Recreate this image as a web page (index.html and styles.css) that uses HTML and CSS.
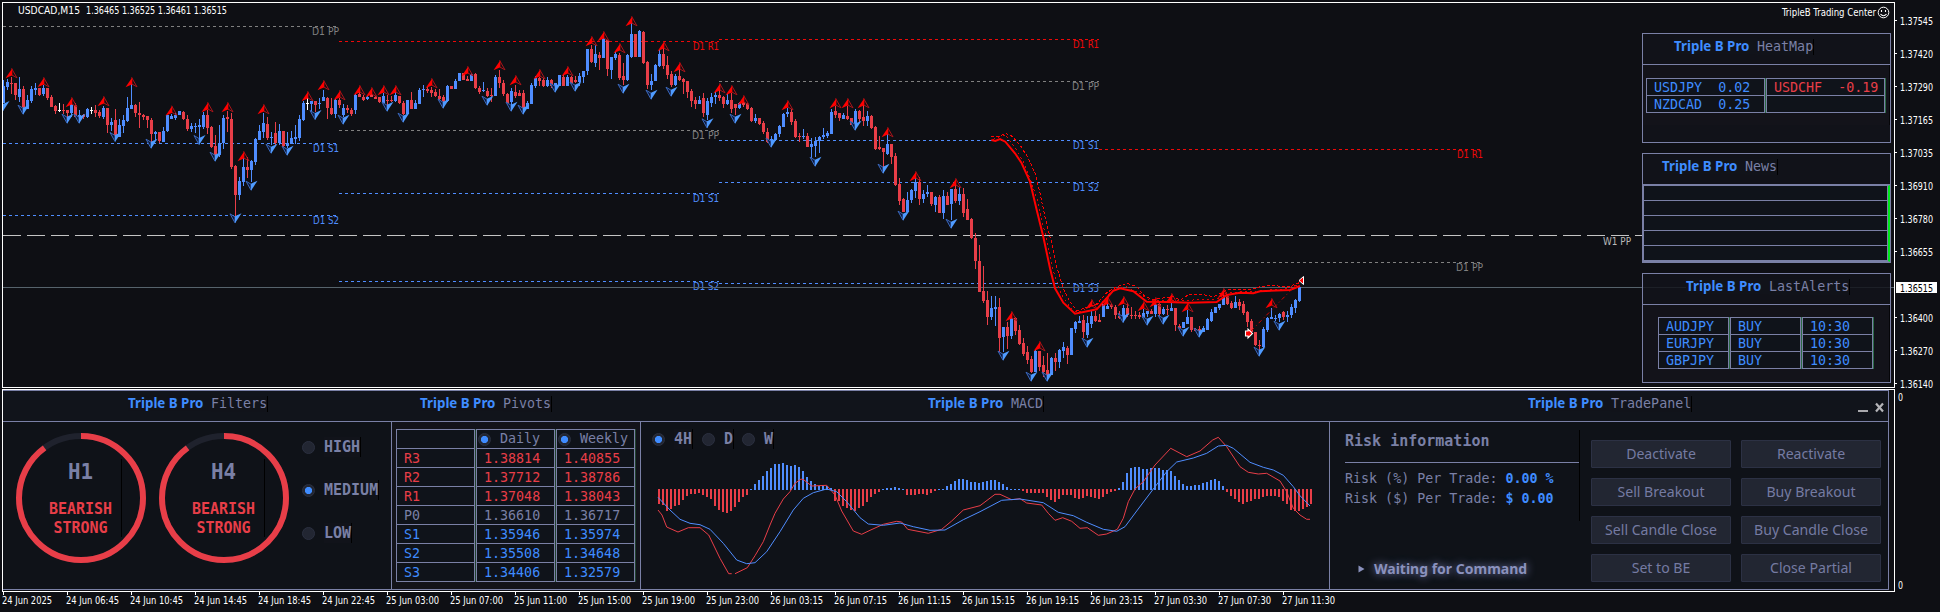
FILE: index.html
```html
<!DOCTYPE html>
<html lang="en">
<head>
<meta charset="utf-8">
<title>USDCAD,M15</title>
<link rel="stylesheet" href="styles.css">
</head>
<body>
<div class="terminal">
  <main class="workspace">
    <section class="chart">
      <svg class="chart-canvas" id="price" viewBox="3 3 1891 384" width="1891" height="384"></svg>
      <aside class="widgets">
        <section class="widget">
          <h2 class="widget-head pad-heat"><b class="brand">Triple B Pro</b><span class="name">HeatMap</span></h2>
          <div class="heat-body">
            <div class="col"><div class="cell up">USDJPY&nbsp; 0.02</div><div class="cell up">NZDCAD&nbsp; 0.25</div></div>
            <div class="col"><div class="cell down">USDCHF&nbsp; -0.19</div><div class="cell"></div></div>
          </div>
        </section>
        <section class="widget">
          <h2 class="widget-head pad-news"><b class="brand">Triple B Pro</b><span class="name">News</span></h2>
          <div class="news-body"><div class="news-row"></div><div class="news-row"></div><div class="news-row"></div><div class="news-row"></div><div class="news-row"></div></div>
        </section>
        <section class="widget">
          <h2 class="widget-head pad-alerts"><b class="brand">Triple B Pro</b><span class="name">LastAlerts</span></h2>
          <div class="alert-body">
            <div class="col"><div class="cell up">AUDJPY</div><div class="cell up">EURJPY</div><div class="cell up">GBPJPY</div></div>
            <div class="col"><div class="cell up">BUY</div><div class="cell up">BUY</div><div class="cell up">BUY</div></div>
            <div class="col"><div class="cell up">10:30</div><div class="cell up">10:30</div><div class="cell up">10:30</div></div>
          </div>
        </section>
      </aside>
    </section>

    <section class="dock">
      <div class="dock-inner">
        <header class="dock-head">
          <h2 class="dock-title pad-filters"><b class="brand">Triple B Pro</b><span class="name">Filters</span></h2>
          <h2 class="dock-title pad-pivots"><b class="brand">Triple B Pro</b><span class="name">Pivots</span></h2>
          <h2 class="dock-title pad-macd"><b class="brand">Triple B Pro</b><span class="name">MACD</span></h2>
          <h2 class="dock-title pad-trade"><b class="brand">Triple B Pro</b><span class="name">TradePanel</span>
            <svg class="window-icons" width="26" height="12" viewBox="0 0 26 12"><path d="M0 9H10" stroke="#a9a9ad" stroke-width="2"/><path d="M18 1.5L25 9.5M25 1.5L18 9.5" stroke="#b4b4b8" stroke-width="2.2"/></svg>
          </h2>
        </header>
        <div class="dock-body">
          <section class="filters">
            <div class="gauge">
              <svg class="ring" viewBox="0 0 130 130" width="130" height="130"><circle cx="65" cy="65" r="62" class="track"/><circle cx="65" cy="65" r="62" class="value" pathLength="100"/></svg>
              <div class="gauge-text"><strong>H1</strong><span>BEARISH</span><span>STRONG</span></div>
            </div>
            <div class="gauge">
              <svg class="ring" viewBox="0 0 130 130" width="130" height="130"><circle cx="65" cy="65" r="62" class="track"/><circle cx="65" cy="65" r="62" class="value" pathLength="100"/></svg>
              <div class="gauge-text"><strong>H4</strong><span>BEARISH</span><span>STRONG</span></div>
            </div>
            <div class="levels">
              <label class="option"><i class="radio"></i><span class="caret">HIGH</span></label>
              <label class="option"><i class="radio on"></i><span class="caret">MEDIUM</span></label>
              <label class="option"><i class="radio"></i><span class="caret">LOW</span></label>
            </div>
          </section>

          <section class="pivots">
            <div class="pcol"><div class="pcell"></div><div class="pcell down">R3</div><div class="pcell down">R2</div><div class="pcell down">R1</div><div class="pcell mid">P0</div><div class="pcell up">S1</div><div class="pcell up">S2</div><div class="pcell up">S3</div></div>
            <div class="pcol"><div class="pcell mid head"><i class="radio on"></i>Daily</div><div class="pcell down">1.38814</div><div class="pcell down">1.37712</div><div class="pcell down">1.37048</div><div class="pcell mid">1.36610</div><div class="pcell up">1.35946</div><div class="pcell up">1.35508</div><div class="pcell up">1.34406</div></div>
            <div class="pcol"><div class="pcell mid head"><i class="radio on"></i>Weekly</div><div class="pcell down">1.40855</div><div class="pcell down">1.38786</div><div class="pcell down">1.38043</div><div class="pcell mid">1.36717</div><div class="pcell up">1.35974</div><div class="pcell up">1.34648</div><div class="pcell up">1.32579</div></div>
          </section>

          <section class="macd">
            <svg class="macd-canvas" id="macd" viewBox="641 422 688 167" width="688" height="167"></svg>
            <div class="frames">
              <label class="option w50"><i class="radio on"></i><span class="caret">4H</span></label>
              <label class="option w40"><i class="radio"></i><span class="caret">D</span></label>
              <label class="option w40"><i class="radio"></i><span class="caret">W</span></label>
            </div>
          </section>

          <section class="trade">
            <div class="risk">
              <div class="risk-box">
                <h3>Risk information</h3>
                <p>Risk (%) Per Trade: <b>0.00 %</b></p>
                <p>Risk ($) Per Trade: <b>$ 0.00</b></p>
              </div>
              <div class="status"><svg width="7" height="8" viewBox="0 0 7 8"><path d="M0.5 0.5L6.5 4L0.5 7.5Z" fill="#8a91bd"/></svg><span>Waiting for Command</span></div>
            </div>
            <div class="buttons">
              <button>Deactivate</button><button>Reactivate</button>
              <button>Sell Breakout</button><button>Buy Breakout</button>
              <button>Sell Candle Close</button><button>Buy Candle Close</button>
              <button>Set to BE</button><button>Close Partial</button>
            </div>
          </section>
        </div>
      </div>
    </section>
    <svg class="time-axis" id="times" viewBox="0 592 1895 20" width="1895" height="20"></svg>
  </main>
  <aside class="price-axis"><svg id="prices" viewBox="1895 0 45 612" width="45" height="612"></svg></aside>
</div>
<script src="chart.js"></script>
</body>
</html>
```
FILE: styles.css
```css
* { box-sizing: border-box; }
body { margin: 0; background: #0e0f14; width: 1940px; height: 612px; overflow: hidden; }
.terminal { display: grid; grid-template-columns: 1895px 45px; height: 612px; }
.workspace { display: flex; flex-direction: column; padding: 2px 0 0 2px; gap: 1px; width: 1895px; }
.chart { position: relative; width: 1893px; height: 386px; border: 1px solid #fff; }
.chart-canvas, .macd-canvas, .time-axis, .price-axis svg { display: block; }
.ui { font-family: "DejaVu Sans Condensed", "DejaVu Sans", sans-serif; font-stretch: condensed; font-size: 10.5px; fill: #fff; }
.time-axis { margin-left: -2px; margin-top: -1px; }

.widgets { position: absolute; left: 1639px; top: 30px; display: flex; flex-direction: column; gap: 10px; }
.widget { width: 249px; height: 110px; border: 1px solid #7a80a6; background: rgba(18, 19, 26, .84); }
.widget-head { margin: 0; height: 31px; border-bottom: 1px solid #7a80a6; display: flex; align-items: center; padding-bottom: 6px; }
.brand { font: bold 13.33px "Noto Sans", sans-serif; color: #3f8cff; width: 83px; white-space: nowrap; line-height: 16px; background: #11131a; }
.name { font: 13.33px/16px "DejaVu Sans Mono", monospace; color: #7a80a6; border-right: 1px solid #000; background: #11131a; position: relative; top: 1px; }
.pad-heat { padding-left: 31px; }
.pad-news { padding-left: 19px; }
.pad-alerts { padding-left: 43px; }

.col { border-right: 1px solid #2b6a45; }
.cell { height: 17px; border: 1px solid #7a80a6; border-bottom: 0; background: #0f131a; font: 13.33px/17px "DejaVu Sans Mono", monospace; padding-left: 7px; white-space: nowrap; }
.cell:last-child { height: 18px; border-bottom: 1px solid #7a80a6; }
.up { color: #3f8cff; }
.down { color: #e83e48; }
.mid { color: #7a80a6; }
.heat-body { display: grid; align-items: start; grid-template-columns: 120px 120px; padding: 13px 0 0 3px; height: 60px; background: #13131a; border-right: 1px solid #050508; }
.news-body { width: 247px; height: 77px; border: 1px solid #7a80a6; border-right: 2px solid #00e81c; background: #0f131a; }
.news-row { height: 15px; border-bottom: 1px solid #7a80a6; border-right: 1px solid #7a80a6; }
.news-row:first-child { height: 16px; margin-top: -1px; }
.alert-body { display: grid; align-items: start; grid-template-columns: repeat(3, 72px); padding: 12px 0 0 15px; height: 77px; background: #13131a; border-right: 1px solid #050508; }

.dock { width: 1893px; height: 203px; border: 1px solid #fff; background: #0e0f14; }
.dock-inner { width: 1886px; height: 200px; border: 1px solid #7a80a6; border-left: 0; background: #0f1218; }
.dock-head, .dock-body { display: grid; grid-template-columns: 389px 249px 689px 558px; }
.dock-head { height: 31px; border-bottom: 1px solid #7a80a6; background: #11141b; }
.dock-title { margin: 0; display: flex; align-items: center; padding-bottom: 7px; }
.pad-filters { padding-left: 125px; }
.pad-pivots { padding-left: 28px; }
.pad-macd { padding-left: 287px; }
.pad-trade { padding-left: 198px; }
.window-icons { margin-left: 166px; margin-top: 11px; }
.dock-body { height: 167px; }
.dock-body > section { border-right: 1px solid #7a80a6; }
.dock-body > .trade { border-right: 0; }

.filters { display: flex; padding: 11px 0 0 13px; gap: 13px; }
.gauge { display: grid; width: 130px; height: 130px; }
.gauge > * { grid-area: 1 / 1; }
.track, .value { fill: none; stroke-width: 6; }
.track { stroke: #1f222d; }
.value { stroke: #e83e48; stroke-dasharray: 90 10; transform: rotate(-90deg); transform-origin: 65px 65px; }
.gauge-text { width: 82px; height: 78px; margin: 26px 0 0 24px; border-right: 1px solid #000; display: flex; flex-direction: column; align-items: center; font: bold 15px/19px "DejaVu Sans Mono", monospace; color: #e83e48; }
.gauge-text strong { font-size: 20.8px; line-height: 26px; color: #7a80a6; margin-bottom: 15px; }
.levels { display: flex; flex-direction: column; gap: 23px; padding-top: 4px; }
.option { display: flex; align-items: center; height: 20px; font: bold 15px/20px "DejaVu Sans Mono", monospace; color: #7a80a6; gap: 9px; }
.caret { border-right: 1px solid #000; background: #11131a; }
.radio { display: block; flex: none; width: 13px; height: 13px; border-radius: 50%; background: #222632; border: 1px solid #2b3040; }
.radio.on { background: radial-gradient(circle, #3f8cff 0 3.2px, #222632 4px); }

.pivots { display: grid; grid-template-columns: repeat(3, 80px); padding: 7px 0 0 4px; background: #13131a; }
.pcol { width: 80px; border-right: 1px solid #20432f; height: 153px; }
.pcell { height: 19px; border: 1px solid #7a80a6; border-bottom: 0; background: #0f131a; font: 13.33px/20px "DejaVu Sans Mono", monospace; padding-left: 7px; }
.pcell:last-child { height: 20px; border-bottom: 1px solid #7a80a6; }
.pcell.head { display: flex; gap: 9px; padding-left: 1px; align-items: center; }

.macd { display: grid; }
.macd > * { grid-area: 1 / 1; }
.frames { display: flex; padding: 7px 0 0 11px; }
.frames .option { gap: 9px; }
.w50 { width: 50px; }
.w40 { width: 40px; }
.line-a { fill: none; stroke: #e83e48; stroke-width: 1; }
.line-b { fill: none; stroke: #4f8dff; stroke-width: 1; }

.trade { display: grid; grid-template-columns: 261px 297px; }
.risk { padding: 8px 0 0 15px; }
.risk-box { width: 235px; height: 91px; border-right: 1px solid #000; font: 13.33px/20px "DejaVu Sans Mono", monospace; color: #7a80a6; }
.risk h3 { margin: 0 0 6px; height: 33px; padding-top: 1px; font-size: 15px; line-height: 20px; border-bottom: 1px solid #7a80a6; }
.risk p { margin: 0; }
.risk b { color: #3f8cff; }
.status { display: flex; align-items: center; gap: 9px; padding-left: 13px; margin-top: 38px; font: bold 14px/20px "Noto Sans", sans-serif; color: #8a91bd; text-shadow: 0 0 9px #7a80b8; white-space: nowrap; }
.buttons { display: grid; grid-template-columns: 140px 140px; grid-auto-rows: 28px; gap: 10px; padding-top: 18px; align-content: start; }
.buttons button { margin: 0; padding: 0 0 1px; background: #222632; border: 1px solid #2c3144; border-radius: 1px; color: #757ba2; font: 14.1px/24px "Noto Sans", sans-serif; }
```
FILE: chart.js
```js
const NS = 'http://www.w3.org/2000/svg';
const BLUE = '#4f8dff', RED = '#e83e48', WHITE = '#ffffff';

function add(parent, tag, attrs, text) {
  const el = document.createElementNS(NS, tag);
  for (const key in attrs) el.setAttribute(key, attrs[key]);
  if (text !== undefined) el.textContent = text;
  parent.appendChild(el);
  return el;
}

// Prices are stored in thirds of a pixel: colour, high, body top, body bottom, low.
const px = v => Math.round(v / 3);
const price = document.getElementById('price');

// Pivot levels: x1, x2, y, colour, label
const GRAY = '#808080', PIV = '#ee0808';
const levels = [
  [3, 336, 26, GRAY, 'D1 PP'], [3, 336, 143, BLUE, 'D1 S1'], [3, 336, 215, BLUE, 'D1 S2'],
  [339, 719, 41, PIV, 'D1 R1'], [339, 719, 130, GRAY, 'D1 PP'], [339, 719, 193, BLUE, 'D1 S1'], [339, 719, 281, BLUE, 'D1 S2'],
  [719, 1099, 39, PIV, 'D1 R1'], [719, 1099, 81, GRAY, 'D1 PP'], [719, 1099, 140, BLUE, 'D1 S1'], [719, 1099, 182, BLUE, 'D1 S2'], [719, 1099, 283, BLUE, 'D1 S3'],
  [1099, 1480, 149, PIV, 'D1 R1'], [1099, 1480, 262, GRAY, 'D1 PP']
];
for (const [x1, x2, y, c, label] of levels) {
  add(price, 'path', { d: `M${x1} ${y + .5}H${x2}`, stroke: c, 'stroke-dasharray': '3 3', 'shape-rendering': 'crispEdges' });
  const w = label === 'D1 PP' ? 27 : 26;
  const end = x2 === 336 ? 339 : x2 === 1480 ? 1483 : x2;
  add(price, 'text', { class: 'ui', x: end - w, y: y + 9.4, textLength: w, lengthAdjust: 'spacingAndGlyphs', style: `fill:${c}` }, label);
}
add(price, 'path', { d: 'M3 235.5H1642', stroke: '#c4c4c4', 'stroke-dasharray': '18 6', 'shape-rendering': 'crispEdges' });
add(price, 'text', { class: 'ui', x: 1603, y: 244.5, textLength: 28, lengthAdjust: 'spacingAndGlyphs', style: 'fill:#b8b8b8' }, 'W1 PP');
add(price, 'path', { d: 'M3 287.5H1894', stroke: '#56636c', 'shape-rendering': 'crispEdges' });

const segments = [
  { x: 3, dy: 0, rows: `B240,257,310,310 B238,246,262,270 R230,248,251,281 R248,248,286,299 B231,266,291,305 R257,266,320,326 B286,299,326,326 B257,266,303,310 B248,263,269,284 R263,263,284,288 B255,263,282,288 R263,263,293,299 R284,290,320,320 R315,317,334,341 W308,329,332,336 R311,329,332,341 R329,330,340,350 B308,314,340,350 R308,314,350,350 B330,344,350,360 R341,344,350,356 B325,326,351,354 W320,329,332,341 R315,329,338,350 R329,335,348,354 B317,323,350,356 R323,323,374,398 B353,366,374,392 R326,360,413,420 B356,374,411,411 B344,360,378,398 B290,323,363,366 B248,315,328,328 R311,314,340,350 R306,338,346,384 R341,345,350,360 R348,348,360,384 R354,360,402,428 B392,396,402,420 R396,396,423,430 B380,392,425,425 B345,345,392,395 B342,347,357,357 B338,345,354,360 B333,333,345,345 R333,335,356,360 R345,357,387,392 B370,378,387,396 B369,377,381,398 B357,375,381,415 B335,345,381,386 R329,345,384,402 R378,380,441,444 R405,438,468,474 B375,430,465,470 B344,353,430,448 R333,352,357,395 R339,357,500,507 R495,498,584,648 B530,542,585,600 B470,500,545,557 R471,500,510,533 B480,482,510,546 B414,416,486,495 B375,393,420,420 B340,369,396,413 R350,372,414,420 B395,410,414,435 R366,399,430,437 B372,393,430,435 R393,393,437,441 B396,430,438,445 B393,414,432,432 B375,411,417,432 B345,357,414,424 B303,309,360,363 W290,309,312,330 B303,303,312,341 R303,303,315,335 B294,308,311,327 B270,290,303,303 R290,293,324,357 R293,323,342,345 B296,300,342,354 R294,300,315,325 B312,324,345,350 R315,323,330,340 R324,329,342,347 B282,285,330,342 R275,283,292,292 R285,290,300,303 B288,290,297,300 R278,284,290,290 R288,290,296,296` },
  { x: 379, dy: 0, rows: `R290,292,307,309 B278,288,309,312 R284,300,303,318 R288,300,303,306 B275,286,303,306 R288,288,309,312 R303,309,341,345 B300,300,342,345 R275,300,326,326 B300,309,326,326 B263,270,311,311 B255,266,270,290 R262,267,273,278 R260,270,279,291 R267,276,288,291 R267,288,297,300 R286,291,302,310 B255,258,302,305 R257,258,266,266 B237,242,266,266 B218,218,243,243 R218,220,240,240 R228,237,242,242 B220,222,243,243 R218,222,264,266 R258,264,276,282 B246,270,273,276 R263,272,287,290 R264,285,288,305 B225,231,288,288 R210,231,248,263 R240,249,282,288 R280,282,309,315 B264,273,306,320 R255,276,288,293 R270,279,288,288 R270,279,327,327 B303,309,326,326 B249,255,312,312 B228,234,257,263 R230,234,242,258 R234,240,258,260 B231,240,258,260 R237,239,257,263 B249,249,260,264 B225,225,258,258 R225,230,258,258 B225,230,258,258 R228,231,248,252 R228,240,246,250 B219,228,247,258 B213,213,231,248 B146,147,213,224 R135,147,186,189 B135,162,189,202 R155,164,174,210 B110,117,174,174 R120,120,207,227 B170,171,209,236 B155,162,174,180 R158,165,234,240 R188,228,240,255 B162,165,240,242 B66,101,171,174 R101,101,171,171 B90,93,171,171 R93,96,189,192 R183,186,255,268 B222,242,255,270 B192,195,242,242 B150,162,198,200 R141,162,198,206 R168,195,225,237 R213,222,255,260 B222,228,255,258 R204,228,240,243 R234,236,246,281 R243,243,276,293 R267,273,303,320 R290,300,312,327 B288,300,312,312 R279,293,338,350 B294,303,345,360 B278,290,308,320 B276,285,291,312` },
  { x: 719, dy: 0, rows: `R270,285,293,303 R288,290,311,325 B279,300,311,314 R279,300,326,339 R312,312,324,345 B306,309,325,328 R302,306,315,320 R309,312,327,330 R321,324,363,366 B342,353,363,369 R353,354,372,375 R363,369,396,402 R384,396,426,430 B408,417,425,428 B399,402,420,420 B375,378,402,411 B339,342,381,381 B324,336,342,350 R328,336,366,375 R357,363,411,413 R399,408,411,425 B387,408,411,417 R399,408,441,441 B414,432,441,480 B411,422,437,472 B408,411,423,459 B384,405,411,417 B393,399,408,414 B327,336,402,402 R318,333,345,354 R339,339,353,363 B339,345,357,357 R318,348,357,360 R354,354,375,375 B327,333,375,375 R329,333,357,366 R315,350,362,377 B333,348,363,377 R345,348,383,386 R378,381,447,450 R408,441,447,450 R444,445,456,504 B399,432,462,465 R432,432,471,492 R459,468,554,557 R534,552,603,615 R594,597,636,636 B576,600,636,636 B567,570,600,609 B531,545,573,594 R531,545,597,615 B570,582,597,609 B555,576,582,591 R576,576,612,617 B588,591,615,636 R585,591,639,639 B570,587,639,657 R575,588,615,615 B567,567,612,660 R552,567,603,608 B560,582,603,614 R564,582,639,651 R597,627,660,660 R654,656,713,717` },
  { x: 975, dy: 300, rows: `R399,414,483,507 R435,483,576,576 R498,573,603,608 R573,600,650,674 B588,624,650,659 B588,621,627,677 R594,621,713,755 B680,681,711,756 R666,682,708,747 B651,654,708,717 R652,655,692,705 R675,690,732,735 R714,729,762,768 R738,756,780,792 R768,777,816,818 B750,753,816,816 R752,753,801,813 R768,795,816,830 R759,810,826,826 B771,773,825,825 R759,773,786,813 B747,750,786,803 B726,741,753,773 R738,744,765,792 B684,685,765,765 B663,665,686,698 B648,663,668,670 R645,659,696,713 B648,669,705,715 B630,648,672,683 R633,647,663,665 R642,660,666,666 B612,612,650,650 B603,618,627,627 R612,615,620,626 R615,621,644,657 R633,648,654,657 B615,624,650,655 R608,624,644,650 R621,644,647,657 R633,644,647,657 R636,645,651,657 B627,639,653,656 B633,633,642,650 R627,633,642,642 B606,612,642,650 R606,612,642,650 B621,627,642,645 R615,627,630,645 B609,624,633,633 R624,624,675,692 R672,678,683,693 B665,666,683,685 B630,651,672,672 R651,651,690,696 R684,687,692,692 R678,686,694,696 B678,684,695,695 B654,657,690,690 B627,636,663,666 B621,621,639,639 B612,612,623,630 B585,590,615,615 R588,588,612,615 R603,609,624,627 B588,606,624,624 R597,606,618,630 R603,612,639,645 R633,636,666,681 R657,663,697,702 R696,696,734,738 R720,734,738,750 B681,687,741,746 B651,654,690,696 B624,652,657,657 B645,654,657,663 B639,642,655,665 R633,636,650,660 B633,645,651,665 B612,621,645,654 B597,600,624,639 B560,561,603,606` }
];
const colours = { B: BLUE, R: RED, W: WHITE };
for (const seg of segments) {
  seg.rows.split(' ').forEach((row, i) => {
    const [hi, top, bot, lo] = row.slice(1).split(',').map(v => px(+v + seg.dy));
    const x = seg.x + i * 4, fill = colours[row[0]];
    add(price, 'rect', { x, y: hi, width: 1, height: Math.max(1, lo - hi), fill });
    const bx = Math.max(3, x - 1);
    add(price, 'rect', { x: bx, y: top, width: x + 2 - bx, height: Math.max(1, bot - top), fill });
  });
}

// Fractal arrows: [origin x, origin y, "x:tip ..."] per direction
const ups = [
  [0, 0, '34:205 130:232 214:292 310:289 394:232 514:317 622:307 682:307 730:454 790:313 922:274 970:241 1018:271 1078:256 1114:262 1150:256 1186:256'],
  [960, 0, '334:235 442:199 538:181 586:226 658:208 742:199 814:109 850:94 898:130 934:49 1030:124 1078:187'],
  [1920, 0, '238:250 274:256 310:286 442:301 586:295 622:295 670:295 742:382 826:514 946:535'],
  [2820, 300, '214:634 298:724 454:598 502:590 550:589 610:604 646:592 694:580 742:607 850:565 994:595']
];
const downs = [
  [0, 0, '10:333 70:344 202:371 238:371 346:426 454:446 598:435 646:485 706:670 754:572 814:461 862:467 946:360 1030:374 1162:335'],
  [960, 0, '250:368 370:326 502:317 574:335 610:344 706:278 766:275 910:281 994:299 1054:290 1162:385'],
  [1920, 0, '286:371 394:443 526:500 646:392 730:521 790:662 934:686'],
  [2820, 300, '190:782 274:845 322:845 442:743 550:669 622:677 670:674 730:710 778:713 958:770 1018:692']
];
function arrows(groups, draw) {
  for (const [ox, oy, list] of groups)
    for (const item of list.split(' ')) {
      const [x, y] = item.split(':').map(Number);
      draw(Math.round((x + ox - 1) / 3) + .5, (y + oy) / 3);
    }
}
arrows(ups, (x, y) => {
  add(price, 'path', { d: `M${x} ${y}L${x + 5.5} ${y + 9.5}L${x} ${y + 6.5}`, fill: 'none', stroke: '#a8141a', 'stroke-width': 1 });
  add(price, 'path', { d: `M${x + .8} ${y}V${y + 7}L${x - 6} ${y + 10}Z`, fill: '#ff0000' });
});
arrows(downs, (x, y) => {
  add(price, 'path', { d: `M${x - .5} ${y - .5}L${x - 5.5} ${y - 9.5}L${x - .5} ${y - 6.5}Z`, fill: '#0d1838', stroke: '#3a68bd', 'stroke-width': 1 });
  add(price, 'path', { d: `M${x - .5} ${y}V${y - 7}L${x + 6} ${y - 10}Z`, fill: '#4f9bff' });
});

// Moving averages
const toPath = (pts, ox, oy) => 'M' + pts.split(' ').map(p => {
  const [x, y] = p.split(',').map(Number);
  return `${(ox + x / 3).toFixed(1)} ${(oy + y / 3).toFixed(1)}`;
}).join('L');
const average = '154,120 166,123 180,117 196,125 225,160 245,190 270,245 290,330 310,410 330,505 345,565 370,608 405,641 470,628 495,600 520,572 540,565 580,574 620,605 680,606 750,608 830,606 860,585 900,578 940,580 960,574 1050,570 1080,558';
const envelope = '154,110 180,108 196,100 215,108 240,135 265,175 285,220 300,280 315,350 335,430 350,500 370,565 390,605 412,633 440,622 470,612 500,578 530,560 562,550 590,560 615,590 640,598 700,590 720,600 745,585 780,582 820,590 850,575 870,568 935,568 960,560 1000,556 1040,562 1078,548';
const inner = '160,118 196,104 230,150 255,196 275,250 292,300 308,370 325,440 342,520 362,580 390,622 412,638 450,622 485,608 515,574 560,560 600,580 630,602 700,600 760,600 830,598 860,578 950,573 1040,566 1078,552';
add(price, 'path', { d: toPath(envelope, 940, 100), fill: 'none', stroke: '#ff0000', 'stroke-dasharray': '3 2', 'shape-rendering': 'crispEdges' });
add(price, 'path', { d: toPath(inner, 940, 100), fill: 'none', stroke: '#e00000', 'stroke-dasharray': '2 3', 'shape-rendering': 'crispEdges' });
add(price, 'path', { d: toPath(average, 940, 100), fill: 'none', stroke: '#ff0000', 'stroke-width': 2 });
add(price, 'path', { d: 'M1251 331L1300 281', stroke: '#d80000', 'stroke-dasharray': '4 3 1 3' });
add(price, 'path', { d: 'M1245.5 331V336H1248V338L1252.5 333.4L1248 329V331Z', fill: '#ff0000', stroke: '#fff', 'stroke-width': 1.1 });
add(price, 'path', { d: 'M1303.5 276.5L1299 280.5L1303.5 284.5Z', fill: '#ff0000', stroke: '#fff', 'stroke-width': 1 });

const label = (svg, x, y, w, text, style) =>
  add(svg, 'text', { class: 'ui', x, y, textLength: w, lengthAdjust: 'spacingAndGlyphs', style: style || '' }, text);
label(price, 18, 14, 62, 'USDCAD,M15');
label(price, 86, 14, 141, '1.36465 1.36525 1.36461 1.36515');
label(price, 1782, 15.5, 94, 'TripleB Trading Center');
add(price, 'circle', { cx: 1883.5, cy: 12.5, r: 5.3, fill: 'none', stroke: '#fff' });
add(price, 'path', { d: 'M1881.5 10V12M1885.5 10V12M1880.5 14.2Q1883.5 17.2 1886.5 14.2', fill: 'none', stroke: '#fff', 'stroke-width': 1.1 });

// MACD: bars are measured from the zero line, four pixels apart
const macd = document.getElementById('macd');
const bars = [
  'R357,360,378,372,363,360,345,333,327,327,324,330,336,342,363,374,381,384,378,366,350,336,330',
  'B311,297,285,273,258,249,237,237,234,240,243,240,246,258,276,288,297,303,303,303,309',
  'R348,348,363,369,374,378,369,363,351,336,327,321', 'B312,309,309,306,309,312', 'R330,330,330,327,327,330,324,318',
  'B312,312,303,297,288,282,282,285,291,291,294,291,288,285,285,291,297,306,312,312,312',
  'R318,324,324,324,324,324,336,345,350,342,330,330,330,339,342,339,333,336,339,342,336,327,321,318',
  'B309,291,264,249,246,246,252,252,249,249,249,254,256,258,273,285,297,303,303,300,300,294,291,285,282,288,303',
  'R321,333,342,350,357,350,348,342,342,336,333,333,333,336,348,357,375,378,378,372,366,357'
];
let bx = 658;
for (const run of bars)
  for (const v of run.slice(1).split(',')) {
    const y = 385 + px(+v);
    if (run[0] === 'R') add(macd, 'rect', { x: bx, y: 489, width: 2, height: y - 489, fill: RED });
    else add(macd, 'rect', { x: bx, y, width: 2, height: 490 - y, fill: BLUE });
    bx += 4;
  }
add(macd, 'path', { class: 'line-a', d: toPath('54,375 66,390 80,426 114,441 145,428 180,428 206,450 240,520 266,566 275,566', 640, 385) });
add(macd, 'path', { class: 'line-a', d: toPath('285,566 322,548 345,512 370,470 390,420 405,385 430,342 450,320 465,295 483,282 492,285 515,303 560,301 585,330 605,378 640,438 665,448 690,436 730,418 770,409 785,411 803,433 865,445 905,433 935,408 970,375 1020,362 1065,328 1080,328 1115,344 1140,341 1160,354 1205,360 1225,385 1245,406 1268,398 1295,409 1320,430 1342,428 1375,451 1400,447 1432,433 1450,400 1465,350 1485,312 1510,290 1545,240 1592,190 1640,215 1680,198 1718,165 1735,157 1760,185 1800,245 1825,262 1855,267 1880,265 1920,288 1940,320 1960,370 1980,390 2000,403 2010,403', 640, 385) });
add(macd, 'path', { class: 'line-b', d: toPath('54,337 90,375 120,403 150,415 180,419 210,433 250,475 290,525 320,536 345,533 380,500 420,440 460,375 490,340 520,323 560,312 590,320 620,350 660,398 685,417 730,421 780,414 820,425 870,436 915,435 970,404 1020,380 1085,346 1140,342 1210,353 1255,382 1300,392 1340,412 1390,433 1430,439 1455,425 1490,378 1540,312 1580,260 1610,231 1660,219 1700,205 1735,183 1760,181 1780,190 1830,232 1870,247 1900,255 1930,271 1960,305 1980,332 2010,363', 640, 385) });

// Axes
const times = document.getElementById('times');
['24 Jun 2025', '24 Jun 06:45', '24 Jun 10:45', '24 Jun 14:45', '24 Jun 18:45', '24 Jun 22:45', '25 Jun 03:00', '25 Jun 07:00', '25 Jun 11:00', '25 Jun 15:00', '25 Jun 19:00', '25 Jun 23:00', '26 Jun 03:15', '26 Jun 07:15', '26 Jun 11:15', '26 Jun 15:15', '26 Jun 19:15', '26 Jun 23:15', '27 Jun 03:30', '27 Jun 07:30', '27 Jun 11:30'].forEach((t, i) => {
  add(times, 'rect', { x: 3 + 64 * i, y: 592, width: 1, height: 3, fill: WHITE });
  label(times, 2 + 64 * i, 604.3, i ? 53 : 50, t);
});
const prices = document.getElementById('prices');
['1.37545', '1.37420', '1.37290', '1.37165', '1.37035', '1.36910', '1.36780', '1.36655', '', '1.36400', '1.36270', '1.36140'].forEach((t, i) => {
  if (!t) return;
  add(prices, 'rect', { x: 1895, y: 20 + 33 * i, width: 2, height: 1, fill: WHITE });
  label(prices, 1900, 24.5 + 33 * i, 33, t);
});
add(prices, 'rect', { x: 1896, y: 282, width: 41, height: 11, fill: WHITE });
label(prices, 1900, 291.5, 33, '1.36515', 'fill:#000');
label(prices, 1898, 400.5, 5, '0');
label(prices, 1898, 588.5, 5, '0');
```
